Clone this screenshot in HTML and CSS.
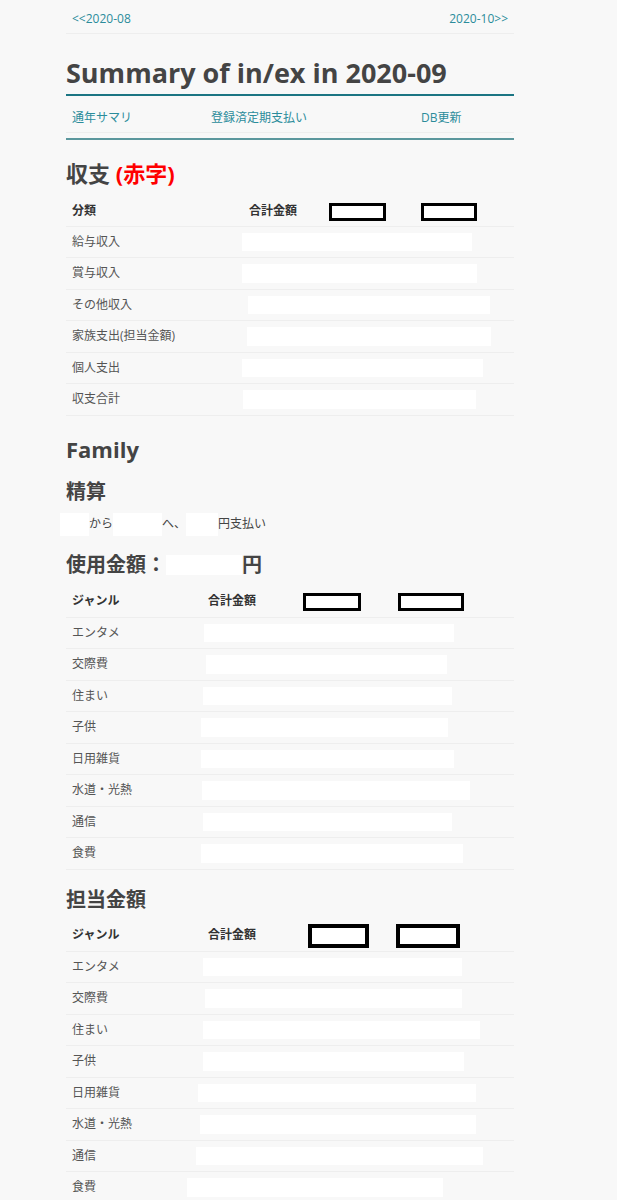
FILE: index.html
```html
<!DOCTYPE html>
<html lang="ja">

<head>
    <meta charset="UTF-8">
    <meta name="viewport" content="width=device-width, initial-scale=1.0">
    <title>Summary of in/ex in 2020-09</title>
    <link rel="stylesheet" href="styles.css">
</head>

<body>
    <div class="page">
        <nav class="month-nav">
            <a href="#">&lt;&lt;2020-08</a>
            <a href="#">2020-10&gt;&gt;</a>
        </nav>

        <h1 class="title">Summary of in/ex in 2020-09</h1>

        <div class="menu-wrap">
            <ul class="menu">
                <li><a href="#">通年サマリ</a></li>
                <li><a href="#">登録済定期支払い</a></li>
                <li><a href="#">DB更新</a></li>
            </ul>
        </div>

        <h2 class="h2">収支 <span class="deficit">(赤字)</span></h2>
        <table class="summary sum-table">
            <colgroup>
                <col class="c1"><col class="c2"><col class="c3"><col class="c4">
            </colgroup>
            <tr class="head">
                <th>分類</th>
                <th>合計金額</th>
                <th><span class="mask-head" style="width:57px"></span></th>
                <th><span class="mask-head" style="width:56px;margin-left:1px"></span></th>
            </tr>
            <tr><td>給与収入</td><td colspan="3" class="val"><span class="mask" style="margin-left:-1px;width:230px"></span></td></tr>
            <tr><td>賞与収入</td><td colspan="3" class="val"><span class="mask" style="margin-left:-1px;width:235px"></span></td></tr>
            <tr><td>その他収入</td><td colspan="3" class="val"><span class="mask" style="margin-left:5px;width:242px"></span></td></tr>
            <tr><td>家族支出(担当金額)</td><td colspan="3" class="val"><span class="mask" style="margin-left:4px;width:244px"></span></td></tr>
            <tr><td>個人支出</td><td colspan="3" class="val"><span class="mask" style="margin-left:-1px;width:241px"></span></td></tr>
            <tr><td>収支合計</td><td colspan="3" class="val"><span class="mask" style="margin-left:0;width:233px"></span></td></tr>
        </table>

        <h2 class="h2 family">Family</h2>
        <h3 class="h3 settle-title">精算</h3>
        <p class="settle"><span class="blank" style="width:29px;margin-left:-6px"></span>から<span class="blank" style="width:49px"></span>へ、<span class="blank" style="width:32px"></span>円支払い</p>

        <h3 class="h3 used">使用金額：<span class="blank big"></span>円</h3>
        <table class="summary genre-table">
            <colgroup>
                <col class="c1"><col class="c2"><col class="c3"><col class="c4">
            </colgroup>
            <tr>
                <th>ジャンル</th>
                <th>合計金額</th>
                <th><span class="mask-head" style="width:58px"></span></th>
                <th><span class="mask-head" style="width:66px"></span></th>
            </tr>
            <tr><td>エンタメ</td><td colspan="3" class="val"><span class="mask" style="margin-left:2px;width:250px"></span></td></tr>
            <tr><td>交際費</td><td colspan="3" class="val"><span class="mask" style="margin-left:4px;width:241px"></span></td></tr>
            <tr><td>住まい</td><td colspan="3" class="val"><span class="mask" style="margin-left:1px;width:249px"></span></td></tr>
            <tr><td>子供</td><td colspan="3" class="val"><span class="mask" style="margin-left:-1px;width:247px"></span></td></tr>
            <tr><td>日用雑貨</td><td colspan="3" class="val"><span class="mask" style="margin-left:-1px;width:253px"></span></td></tr>
            <tr><td>水道・光熱</td><td colspan="3" class="val"><span class="mask" style="margin-left:0;width:268px"></span></td></tr>
            <tr><td>通信</td><td colspan="3" class="val"><span class="mask" style="margin-left:1px;width:249px"></span></td></tr>
            <tr><td>食費</td><td colspan="3" class="val"><span class="mask" style="margin-left:-1px;width:262px"></span></td></tr>
        </table>

        <h3 class="h3 charge">担当金額</h3>
        <table class="summary genre-table thick">
            <colgroup>
                <col class="c1"><col class="c2"><col class="c3"><col class="c4">
            </colgroup>
            <tr>
                <th>ジャンル</th>
                <th>合計金額</th>
                <th><span class="mask-head" style="width:61px;margin-left:5px"></span></th>
                <th><span class="mask-head" style="width:64px;margin-left:-2px"></span></th>
            </tr>
            <tr><td>エンタメ</td><td colspan="3" class="val"><span class="mask" style="margin-left:1px;width:259px"></span></td></tr>
            <tr><td>交際費</td><td colspan="3" class="val"><span class="mask" style="margin-left:3px;width:257px"></span></td></tr>
            <tr><td>住まい</td><td colspan="3" class="val"><span class="mask" style="margin-left:1px;width:277px"></span></td></tr>
            <tr><td>子供</td><td colspan="3" class="val"><span class="mask" style="margin-left:1px;width:261px"></span></td></tr>
            <tr><td>日用雑貨</td><td colspan="3" class="val"><span class="mask" style="margin-left:-4px;width:278px"></span></td></tr>
            <tr><td>水道・光熱</td><td colspan="3" class="val"><span class="mask" style="margin-left:-2px;width:276px"></span></td></tr>
            <tr><td>通信</td><td colspan="3" class="val"><span class="mask" style="margin-left:-6px;width:287px"></span></td></tr>
            <tr><td>食費</td><td colspan="3" class="val"><span class="mask" style="margin-left:-15px;width:256px"></span></td></tr>
        </table>
    </div>
</body>

</html>
```
FILE: styles.css
```css
* {
    margin: 0;
    padding: 0;
    box-sizing: border-box;
}

body {
    background-color: #f8f8f8;
    color: #444;
    font-family: 'Open Sans', 'Noto Sans CJK JP', sans-serif;
    font-size: 12px;
}

a {
    color: #2b8c9b;
    text-decoration: none;
}

.page {
    width: 448px;
    margin-left: 66px;
    padding-bottom: 40px;
}

/* month links */
.month-nav {
    display: flex;
    justify-content: space-between;
    padding: 10px 6px 5px;
    line-height: 18px;
    border-bottom: 1px solid #eee;
}

.title {
    margin-top: 18px;
    font-size: 27px;
    line-height: 42px;
    font-weight: 700;
    color: #444;
    border-bottom: 2px solid #1b7583;
}

.menu-wrap {
    padding-bottom: 5px;
    border-bottom: 2px solid #5b979d;
}

.menu {
    list-style: none;
    display: grid;
    grid-template-columns: 139px 210px 1fr;
    border-bottom: 1px solid #eee;
}

.menu li {
    padding: 13px 6px 5px;
    line-height: 18px;
}

.h2 {
    margin-top: 19px;
    margin-bottom: 8px;
    font-size: 22px;
    line-height: 28px;
    font-weight: 700;
}

.deficit {
    color: #f00;
}

.family {
    margin-top: 18px;
    margin-bottom: 0;
    line-height: 30px;
}

.h3 {
    margin-top: 15px;
    font-size: 20px;
    line-height: 26px;
    font-weight: 700;
}

.settle-title {
    margin-top: 15px;
}

.used {
    margin-top: 16px;
    margin-bottom: 8px;
}

.charge {
    margin-top: 17px;
    margin-bottom: 7px;
}

.settle {
    margin-top: 7px;
    line-height: 24px;
}

.blank {
    display: inline-block;
    height: 23px;
    vertical-align: middle;
    background-color: #fff;
}

.blank.big {
    width: 76px;
    height: 20px;
    vertical-align: -3px;
}

/* tables */
.summary {
    width: 448px;
    border-collapse: collapse;
    table-layout: fixed;
}

.summary tr {
    border-bottom: 1px solid #eee;
}

.summary th,
.summary td {
    padding: 6px;
    line-height: 18.5px;
    text-align: left;
    vertical-align: middle;
}

.summary th {
    color: #333;
    font-weight: 700;
}

.sum-table .head th {
    padding: 7px 6px 5px;
}

.summary td {
    color: #555;
}

.summary td.val {
    padding-left: 0;
}

.mask {
    display: block;
    height: 18.5px;
    background-color: #fff;
}

.mask-head {
    display: inline-block;
    height: 18px;
    vertical-align: middle;
    background-color: #fff;
    border: 3px solid #000;
}

.thick .mask-head {
    height: 24px;
    margin: -3px 0;
    border-width: 4px;
}

.sum-table .c1 { width: 177px; }
.sum-table .c2 { width: 80px; }
.sum-table .c3 { width: 91px; }
.sum-table .c4 { width: 100px; }

.genre-table .c1 { width: 136px; }
.genre-table .c2 { width: 95px; }
.genre-table .c3 { width: 95px; }
.genre-table .c4 { width: 122px; }
```
